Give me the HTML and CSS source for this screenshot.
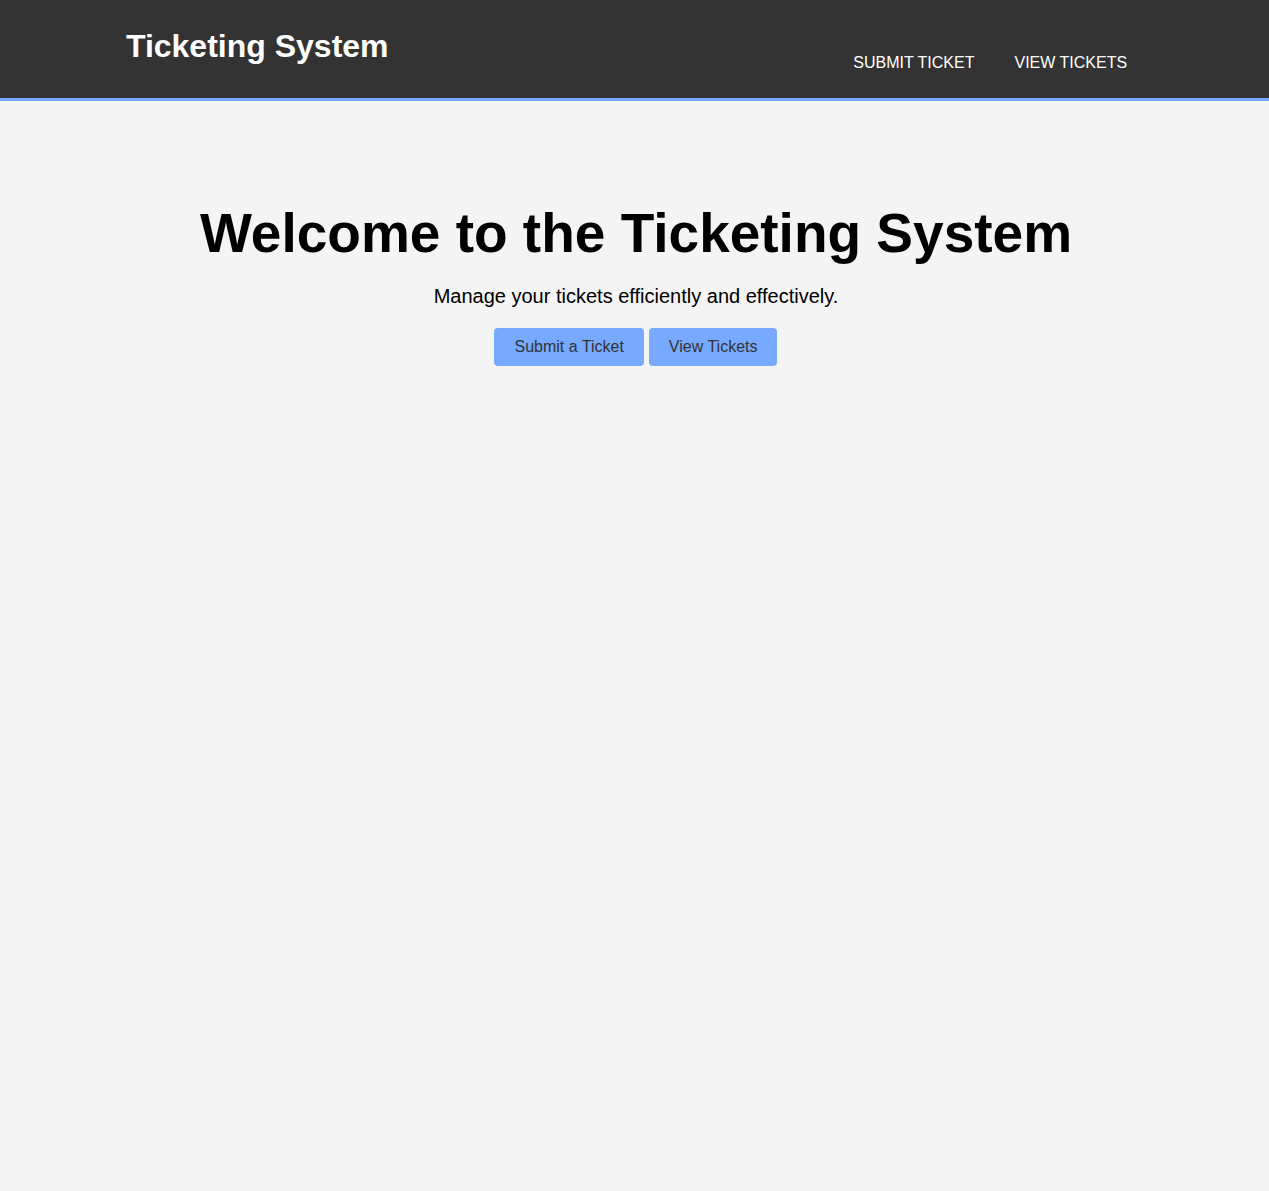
FILE: index.html
```html
<!DOCTYPE html>
<html lang="en">
<head>
<meta charset="utf-8">
<title>Ticketing System</title>
<link rel="stylesheet" href="styles.css">
</head>
<body>
<header class="site-header">
  <div class="container header-inner">
    <h1 class="brand">Ticketing System</h1>
    <nav class="nav">
      <ul class="nav-list">
        <li><a href="#">Submit Ticket</a></li>
        <li><a href="#">View Tickets</a></li>
      </ul>
    </nav>
  </div>
</header>
<section class="showcase">
  <div class="container">
    <h1 class="showcase-title">Welcome to the Ticketing System</h1>
    <p class="showcase-text">Manage your tickets efficiently and effectively.</p>
    <div class="actions">
      <a href="#" class="button">Submit a Ticket</a>
      <a href="#" class="button">View Tickets</a>
    </div>
  </div>
</section>
</body>
</html>
```
FILE: styles.css
```css
html, body {
  margin: 0;
  padding: 0;
}
body {
  font-family: "Liberation Sans", Arial, sans-serif;
  font-size: 16px;
  line-height: normal;
  background: #f4f4f4;
  color: #000;
  min-height: 1191px;
}
.container {
  width: 80%;
  margin: 0 auto;
}
.site-header {
  background: #333333;
  color: #fff;
  height: 70px;
  padding-top: 28px;
  border-bottom: 3px solid #77aaff;
}
.header-inner {
  display: flex;
  justify-content: space-between;
  align-items: flex-start;
}
.brand {
  margin: 0 0 0 -1px;
  font-size: 32px;
  font-weight: bold;
}
.nav {
  margin-top: 26px;
  padding-right: 15px;
}
.nav-list {
  list-style: none;
  margin: 0;
  padding: 0;
  display: flex;
  gap: 40px;
}
.nav-list a {
  color: #fff;
  text-decoration: none;
  text-transform: uppercase;
  font-size: 16px;
}
.showcase {
  text-align: center;
  padding-left: 3px;
}
.showcase-title {
  margin: 100px 0 10px;
  font-size: 55px;
  font-weight: bold;
}
.showcase-text {
  font-size: 20px;
  margin: 20px 0;
}
.actions {
  display: flex;
  justify-content: center;
  gap: 5px;
}
.button {
  display: inline-block;
  background: #77aaff;
  color: #333;
  text-decoration: none;
  font-size: 16px;
  padding: 10px 20px;
  border-radius: 4px;
}
```
